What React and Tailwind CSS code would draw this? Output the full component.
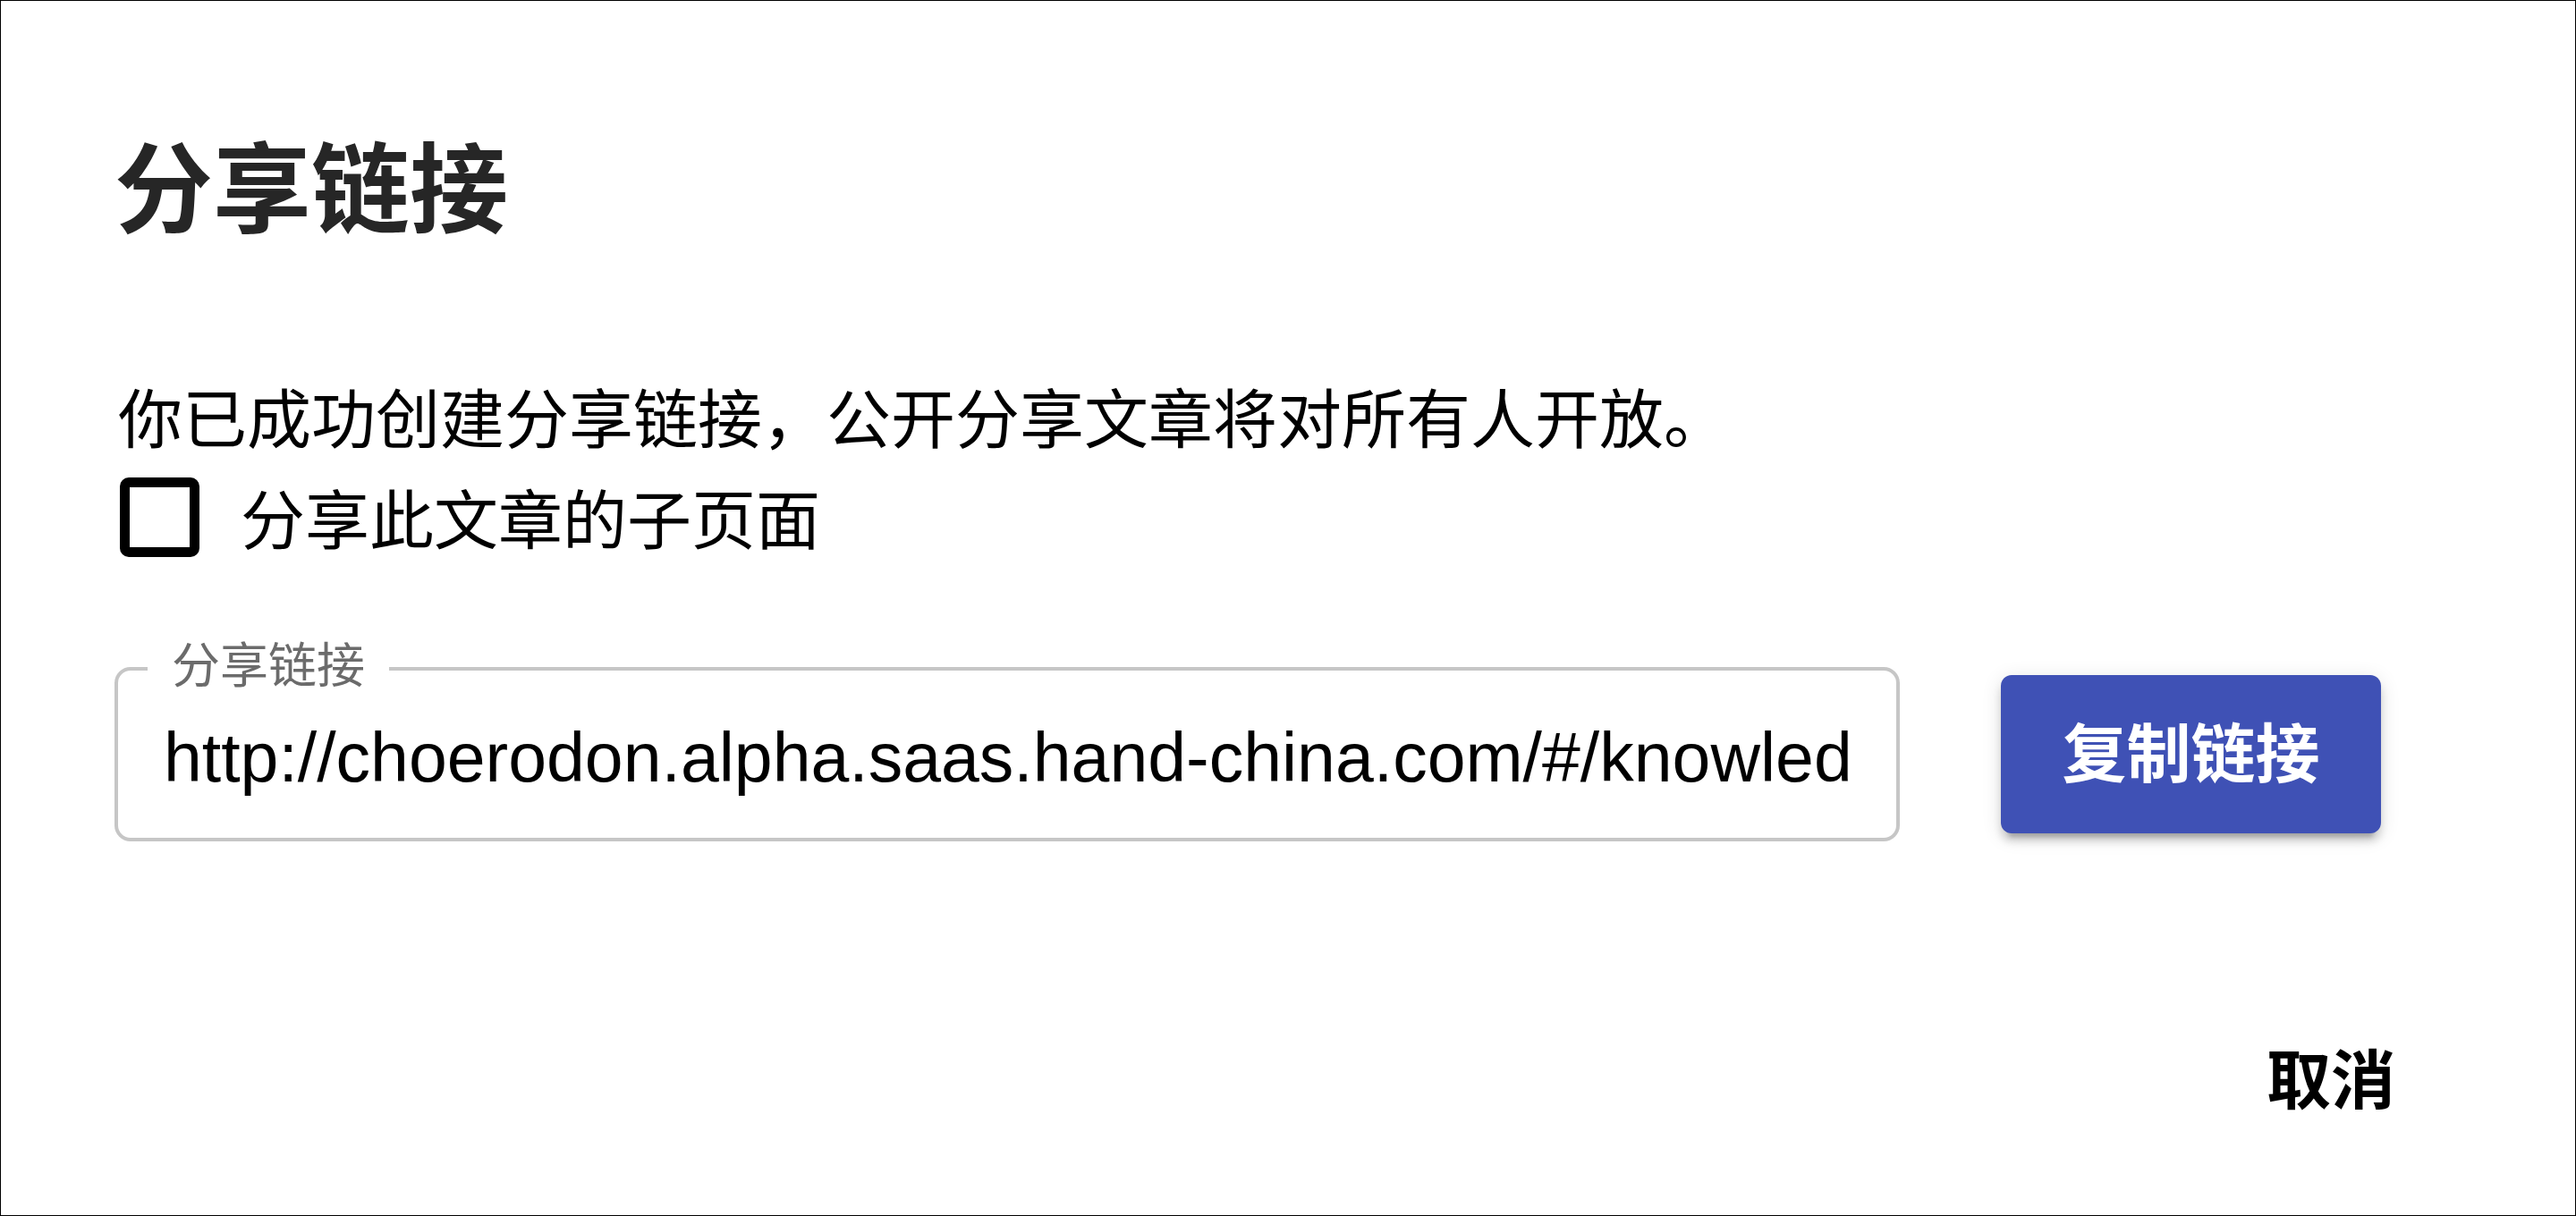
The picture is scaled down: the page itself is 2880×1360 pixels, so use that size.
import React from 'react'

const url = "http://choerodon.alpha.saas.hand-china.com/#/knowled";

const ShareDialog = () => {
  return (
    <div className='w-[2880px] h-[1360px] border border-black bg-white pl-[131px] pt-[158px] flex flex-col font-["Liberation_Sans","Noto_Sans_CJK_SC",sans-serif] text-black'>
      <h2 className='ml-[-4px] text-[110px] leading-none font-bold text-[#262626]'>分享链接</h2>

      <p className='mt-[165px] text-[72px] leading-none'>你已成功创建分享链接，公开分享文章将对所有人开放。</p>

      <label className='mt-[28px] flex items-center gap-[46px] cursor-pointer'>
        <div className='w-[89px] h-[89px] border-[11px] border-black rounded-[10px] ml-[2px]'></div>
        <span className='text-[72px] leading-none pt-[8px]'>分享此文章的子页面</span>
      </label>

      <div className='mt-[123px] flex items-center gap-[113px] ml-[-4px]'>
        {/* outlined text field */}
        <div className='relative w-[1996px] h-[195px] border-[4px] border-[#c6c6c6] rounded-[18px] flex items-center pl-[51px] pr-[30px]'>
          <span className='absolute left-[33px] top-[-32px] bg-white px-[27px] text-[54px] leading-none text-[#6b6b6b]'>分享链接</span>
          <div className='whitespace-nowrap text-[77px] leading-none pt-[7px] font-["Liberation_Sans",sans-serif]'>
            {url}
          </div>
        </div>
        <button className='w-[425px] h-[177px] rounded-[12px] bg-[#3f51b5] text-white text-[72px] leading-none font-bold shadow-[0_13px_5px_-9px_rgba(0,0,0,0.2),0_9px_9px_0_rgba(0,0,0,0.14),0_4px_22px_0_rgba(0,0,0,0.12)]'>
          复制链接
        </button>
      </div>

      <div className='self-end mr-[201px] mt-[232px] text-[72px] leading-none font-bold cursor-pointer'>
        取消
      </div>
    </div>
  )
}

export default function App() {
  return <ShareDialog />
}
